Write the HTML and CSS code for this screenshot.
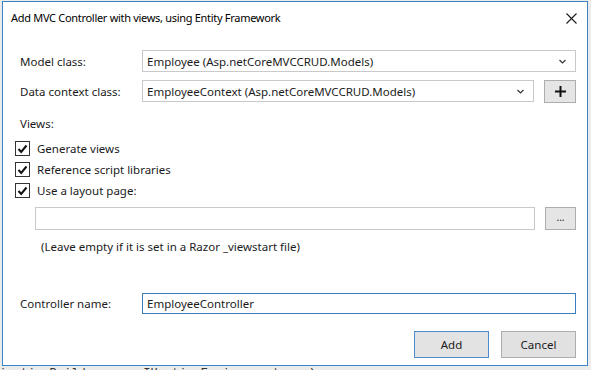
FILE: index.html
```html
<!DOCTYPE html>
<html lang="en">
<head>
    <meta charset="UTF-8">
    <title>Add MVC Controller with views, using Entity Framework</title>
    <link rel="stylesheet" href="styles.css">
</head>
<body>
    <div class="dialog">
        <div class="title-bar">
            <span class="title">Add MVC Controller with views, using Entity Framework</span>
            <svg class="close" width="11" height="11" viewBox="0 0 11 11">
                <path d="M0.5 0.5 L10.5 10.5 M10.5 0.5 L0.5 10.5" stroke="#1a1a1a" stroke-width="1.1" fill="none"/>
            </svg>
        </div>

        <div class="content">
            <div class="field">
                <label class="field-label">Model class:</label>
                <div class="combo">
                    <span>Employee (Asp.netCoreMVCCRUD.Models)</span>
                    <svg class="chevron" width="7" height="5" viewBox="0 0 7 5"><path d="M0.5 1 L3.5 4 L6.5 1" stroke="#333" stroke-width="1.2" fill="none"/></svg>
                </div>
            </div>

            <div class="field field-second">
                <label class="field-label">Data context class:</label>
                <div class="combo-row">
                    <div class="combo">
                        <span>EmployeeContext (Asp.netCoreMVCCRUD.Models)</span>
                        <svg class="chevron" width="7" height="5" viewBox="0 0 7 5"><path d="M0.5 1 L3.5 4 L6.5 1" stroke="#333" stroke-width="1.2" fill="none"/></svg>
                    </div>
                    <div class="btn btn-small">
                        <svg width="11" height="11" viewBox="0 0 11 11"><path d="M5.5 0 V11 M0 5.5 H11" stroke="#111" stroke-width="2" fill="none"/></svg>
                    </div>
                </div>
            </div>

            <div class="views-label">Views:</div>

            <div class="checks">
                <div class="check-row">
                    <span class="box"><svg width="11" height="10" viewBox="0 0 11 10"><path d="M1.5 5 L4.2 8 L9.5 1.5" stroke="#111" stroke-width="2" fill="none"/></svg></span>
                    <span>Generate views</span>
                </div>
                <div class="check-row">
                    <span class="box"><svg width="11" height="10" viewBox="0 0 11 10"><path d="M1.5 5 L4.2 8 L9.5 1.5" stroke="#111" stroke-width="2" fill="none"/></svg></span>
                    <span>Reference script libraries</span>
                </div>
                <div class="check-row">
                    <span class="box"><svg width="11" height="10" viewBox="0 0 11 10"><path d="M1.5 5 L4.2 8 L9.5 1.5" stroke="#111" stroke-width="2" fill="none"/></svg></span>
                    <span>Use a layout page:</span>
                </div>
            </div>

            <div class="layout-row">
                <div class="textbox"></div>
                <div class="btn btn-small btn-dots">...</div>
            </div>

            <div class="hint">(Leave empty if it is set in a Razor _viewstart file)</div>

            <div class="field field-controller">
                <label class="field-label">Controller name:</label>
                <div class="textbox textbox-active">EmployeeController</div>
            </div>

            <div class="actions">
                <div class="btn btn-action btn-default">Add</div>
                <div class="btn btn-action">Cancel</div>
            </div>
        </div>
    </div>

    <div class="code-behind">licationBuilder app, IHostingEnvironment env)</div>
</body>
</html>
```

FILE: styles.css
```css
body {
    margin: 0;
    height: 370px;
    overflow: hidden;
    background-color: #ebebeb;
    font-family: 'Noto Sans', 'Liberation Sans', sans-serif;
    font-size: 11.5px;
    color: #1b1b1b;
}
.dialog {
    box-sizing: border-box;
    width: 586px;
    height: 365px;
    margin: 1px 0 0 2px;
    background-color: #fff;
    border: 1px solid #3b83c4;
    display: flex;
    flex-direction: column;
}
.title-bar {
    height: 31px;
    display: flex;
    align-items: center;
    justify-content: space-between;
    padding: 0 10px 0 8px;
}
.title {
    font-size: 11px;
    letter-spacing: -0.3px;
    color: #000;
}
.close {
    margin-top: 2px;
}
.content {
    padding: 0 11px 0 12px;
    margin-top: 17px;
}
.field {
    display: grid;
    grid-template-columns: 127px 1fr;
    align-items: center;
}
.field-second {
    margin-top: 8px;
}
.field-label {
    padding-left: 5px;
}
.combo {
    box-sizing: border-box;
    height: 22px;
    flex: 1;
    border: 1px solid #c9c9c9;
    display: flex;
    align-items: center;
    justify-content: space-between;
    padding: 0 9px 0 4px;
}
.combo-row {
    display: flex;
    gap: 10px;
}
.btn {
    box-sizing: border-box;
    background-color: #e5e5e5;
    border: 1px solid #adadad;
    display: flex;
    align-items: center;
    justify-content: center;
}
.btn-small {
    width: 32px;
    height: 23px;
}
.btn-dots {
    width: 31px;
    font-size: 10px;
    line-height: 1;
    padding-bottom: 3px;
}
.views-label {
    margin: 13px 0 0 5px;
    line-height: 16px;
}
.checks {
    margin-top: 6px;
}
.check-row {
    height: 21px;
    display: flex;
    align-items: center;
    gap: 7px;
}
.box {
    box-sizing: border-box;
    width: 15px;
    height: 15px;
    border: 1px solid #333;
    background-color: #fff;
    display: flex;
    align-items: center;
    justify-content: center;
}
.layout-row {
    display: flex;
    gap: 10px;
    margin: 6px 0 0 20px;
}
.textbox {
    box-sizing: border-box;
    flex: 1;
    height: 23px;
    border: 1px solid #c9c9c9;
    display: flex;
    align-items: center;
    padding-left: 4px;
}
.hint {
    margin: 9px 0 0 26px;
    line-height: 16px;
}
.field-controller {
    margin-top: 38px;
}
.textbox-active {
    height: 21px;
    border-color: #3b7dbd;
}
.actions {
    display: flex;
    justify-content: flex-end;
    gap: 12px;
    margin-top: 17px;
}
.btn-action {
    width: 75px;
    height: 27px;
    background-color: #e1e1e1;
}
.btn-default {
    border-color: #4f8ccd;
    background-color: #e3e3e3;
}
.code-behind {
    font-family: 'Liberation Mono', monospace;
    font-size: 12px;
    line-height: 14px;
    margin: 1px 0 0 -8px;
    white-space: nowrap;
    color: #333;
}
```
